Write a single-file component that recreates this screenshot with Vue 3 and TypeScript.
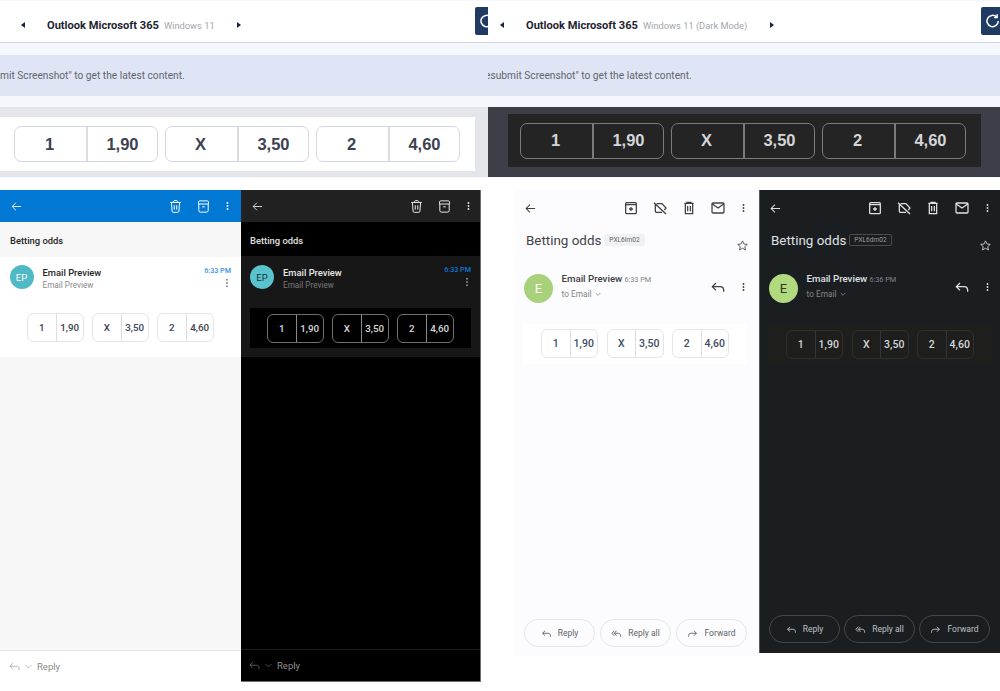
<template>
  <div class="page">
    <div class="top">
      <section v-for="col in columns" :key="col.sub" class="col" :class="col.theme">
        <header class="bar">
          <span class="tri left"></span>
          <span class="title">Outlook Microsoft 365</span>
          <span class="sub">{{ col.sub }}</span>
          <span class="tri right"></span>
          <span class="refresh">
            <svg viewBox="0 0 24 24" class="refresh-ico"><path d="M19 12a7.5 7.5 0 1 1-2.2-5.3M17.5 3v4.2h-4.2" /></svg>
          </span>
        </header>
        <div class="banner"><span class="banner-text">{{ col.note }}</span></div>
        <div class="preview">
          <div class="preview-inner">
            <div v-for="o in odds" :key="o.k" class="odd big">
              <b>{{ o.k }}</b><b>{{ o.v }}</b>
            </div>
          </div>
        </div>
      </section>
    </div>

    <div class="phones">
      <article v-for="p in outlook" :key="p.theme" class="ol" :class="p.theme">
        <div class="ol-head">
          <svg class="ic back" viewBox="0 0 24 24"><path :d="icons.back" /></svg>
          <span class="spacer"></span>
          <svg class="ic" viewBox="0 0 24 24"><path :d="icons.olTrash" /></svg>
          <svg class="ic" viewBox="0 0 24 24"><path :d="icons.olArchive" /></svg>
          <svg class="ic dots" viewBox="0 0 24 24"><path class="fill" :d="icons.dots" /></svg>
        </div>
        <div class="ol-subject">Betting odds</div>
        <div class="ol-body">
          <div class="ol-sender">
            <span class="ol-avatar">EP</span>
            <div class="ol-who">
              <div class="ol-name">Email Preview</div>
              <div class="ol-to">Email Preview</div>
            </div>
            <div class="ol-meta">
              <div class="ol-time">6:33 PM</div>
              <svg class="ol-more" viewBox="0 0 24 24"><path class="fill" :d="icons.dots" /></svg>
            </div>
          </div>
          <div class="band">
            <div v-for="o in odds" :key="o.k" class="odd small">
              <b>{{ o.k }}</b><b>{{ o.v }}</b>
            </div>
          </div>
        </div>
        <div class="ol-fill"></div>
        <footer class="ol-foot">
          <svg class="foot-ic" viewBox="0 0 24 24"><path :d="icons.reply" /></svg>
          <svg class="foot-chev" viewBox="0 0 24 24"><path d="M4 8l8 8 8-8" /></svg>
          <span>Reply</span>
        </footer>
      </article>

      <span class="phones-gap"></span>

      <article v-for="g in gmail" :key="g.theme" class="gm" :class="g.theme">
        <div class="gm-head">
          <svg class="gi gm-back" viewBox="0 0 24 24"><path :d="icons.back" /></svg>
          <span class="spacer"></span>
          <svg class="gi" viewBox="0 0 24 24"><path :d="icons.gmArchive" /></svg>
          <svg class="gi" viewBox="0 0 24 24"><path :d="icons.gmLabelOff" /></svg>
          <svg class="gi" viewBox="0 0 24 24"><path :d="icons.gmTrash" /></svg>
          <svg class="gi" viewBox="0 0 24 24"><path :d="icons.gmMail" /></svg>
          <svg class="gi gm-dots" viewBox="0 0 24 24"><path class="fill" :d="icons.dots" /></svg>
        </div>
        <div class="gm-subject">
          <span class="gm-title">Betting odds</span>
          <span class="gm-tag">{{ g.tag }}</span>
          <span class="spacer"></span>
          <svg class="gi gm-star" viewBox="0 0 24 24"><path :d="icons.star" /></svg>
        </div>
        <div class="gm-sender">
          <span class="gm-avatar">E</span>
          <div class="gm-who">
            <div><span class="gm-name">Email Preview</span> <span class="gm-time">{{ g.time }}</span></div>
            <div class="gm-to">to Email <svg class="gm-chev" viewBox="0 0 24 24"><path d="M5 9l7 7 7-7" /></svg></div>
          </div>
          <svg class="gi gm-reply" viewBox="0 0 24 24"><path :d="icons.reply" /></svg>
          <svg class="gi gm-dots gm-up" viewBox="0 0 24 24"><path class="fill" :d="icons.dots" /></svg>
        </div>
        <div class="gm-band">
          <div v-for="o in odds" :key="o.k" class="odd small">
            <b>{{ o.k }}</b><b>{{ o.v }}</b>
          </div>
        </div>
        <div class="gm-actions">
          <span v-for="a in actions" :key="a.label" class="gm-btn">
            <svg viewBox="0 0 24 24"><path :d="a.icon" /></svg>{{ a.label }}
          </span>
        </div>
      </article>
    </div>
  </div>
</template>

<script setup lang="ts">
const icons = {
  back: "M20.5 12H4M11 5l-7 7 7 7",
  dots: "M12 7.5a2 2 0 1 0 0-4 2 2 0 0 0 0 4zm0 6.5a2 2 0 1 0 0-4 2 2 0 0 0 0 4zm0 6.5a2 2 0 1 0 0-4 2 2 0 0 0 0 4z",
  olTrash: "M3.5 5.5h17M9 5.5V4a1.5 1.5 0 0 1 1.5-1.5h3A1.5 1.5 0 0 1 15 4v1.5M5.5 5.5l1 14a2 2 0 0 0 2 1.8h7a2 2 0 0 0 2-1.8l1-14M10 10v7M14 10v7",
  olArchive: "M4 8V5a2 2 0 0 1 2-2h12a2 2 0 0 1 2 2v3zM4.5 8v10.500a2.500 2.500 0 0 0 2.500 2.500h10a2.500 2.500 0 0 0 2.500-2.500V8M10 12.500h4",
  gmArchive: "M4 8V5.500A1.500 1.500 0 0 1 5.500 4h13A1.500 1.500 0 0 1 20 5.500V8M4 7h16M4 7v12a1.500 1.500 0 0 0 1.500 1.500h13A1.500 1.500 0 0 0 20 19V7M12 10.500v6M9 13.500h6",
  gmLabelOff: "M3 4l18 17M7 5.500h8l6 6.500-2.500 3M5 6.500V17a1.500 1.500 0 0 0 1.500 1.500H15",
  gmTrash: "M5 5h14M9 5V3.500h6V5M6.500 5v15.500h11V5M10 9v8M14 9v8",
  gmMail: "M3 6a1.500 1.500 0 0 1 1.500-1.500h15A1.500 1.500 0 0 1 21 6v12a1.500 1.500 0 0 1-1.500 1.500h-15A1.500 1.500 0 0 1 3 18zM3.500 6l8.500 6 8.500-6",
  star: "M12 3.500l2.600 5.700 6.200.7-4.600 4.200 1.300 6.100L12 17.100l-5.500 3.100 1.300-6.100-4.600-4.200 6.200-.7z",
  reply: "M9 6l-5.500 5.500L9 17M3.500 11.500H15c3.500 0 5.500 2 5.500 5.500v2",
  replyAll: "M7 6l-5 5.500L7 17M12 6l-5 5.500 5 5.500M7 11.500h9c3 0 5 2 5 5.500v2",
  forward: "M15 6l5.500 5.500L15 17M20.500 11.500H9c-3.500 0-5.500 2-5.500 5.500v2",
}

const odds = [
  { k: "1", v: "1,90" },
  { k: "X", v: "3,50" },
  { k: "2", v: "4,60" },
]

const columns = [
  { theme: "light", sub: "Windows 11", note: 'mit Screenshot" to get the latest content.' },
  { theme: "dark", sub: "Windows 11 (Dark Mode)", note: 'esubmit Screenshot" to get the latest content.' },
]

const outlook = [{ theme: "light" }, { theme: "dark" }]

const gmail = [
  { theme: "light", tag: "PXL6lm02", time: "6:33 PM" },
  { theme: "dark", tag: "PXL6dm02", time: "6:36 PM" },
]

const actions = [
  { label: "Reply", icon: icons.reply },
  { label: "Reply all", icon: icons.replyAll },
  { label: "Forward", icon: icons.forward },
]
</script>

<style>
html,
body {
  margin: 0;
  background: #fff;
}
</style>

<style scoped>
.page {
  width: 1000px;
  height: 691px;
  overflow: hidden;
  font-family: Roboto, "Liberation Sans", sans-serif;
  background: #fff;
}
svg path {
  fill: none;
  stroke: currentColor;
  stroke-width: 2;
}
svg path.fill {
  fill: currentColor;
  stroke: none;
}
.spacer {
  flex: 1;
}

/* top strip */
.top {
  display: grid;
  grid-template-columns: 488px 512px;
  height: 178px;
}
.col {
  display: flex;
  flex-direction: column;
  background: #f4f7fb;
  min-width: 0;
  overflow: hidden;
}
.bar {
  display: flex;
  align-items: center;
  height: 42px;
  margin-top: 1px;
  padding-top: 8px;
  background: #fff;
  border-bottom: 1px solid #d4d7dd;
  box-sizing: border-box;
}
.tri {
  width: 0;
  height: 0;
  border-top: 3px solid transparent;
  border-bottom: 3px solid transparent;
  margin-top: -2px;
}
.tri.left {
  border-right: 4px solid #15233c;
  margin-left: 21px;
  margin-right: 22px;
}
.tri.right {
  border-left: 4px solid #15233c;
  margin-left: 22px;
}
.dark .tri.right {
  margin-left: 23px;
}
.dark .tri.left {
  margin-left: 12px;
  margin-right: 22px;
}
.title {
  font-size: 11.1px;
  font-weight: 700;
  color: #1f2430;
  white-space: nowrap;
}
.sub {
  font-size: 9.3px;
  color: #a3a6ad;
  margin-left: 5px;
  white-space: nowrap;
}
.refresh {
  margin-left: auto;
  align-self: flex-start;
  width: 13px;
  height: 28px;
  margin-top: -2px;
  background: #1f3a63;
  border-radius: 2px 0 0 2px;
  overflow: hidden;
  color: #fff;
  display: block;
}
.dark .refresh {
  width: 19px;
}
.refresh-ico {
  display: block;
  width: 18px;
  height: 18px;
  margin: 5px 0 0 3px;
}
.banner {
  margin-top: 12px;
  height: 41px;
  background: #dfe5f5;
  display: flex;
  align-items: center;
  font-size: 10.2px;
  color: #62656d;
  white-space: nowrap;
}
.dark .banner-text {
  margin-left: -3px;
}
.preview {
  margin-top: 11px;
  height: 70px;
  background: #e4e5ea;
  padding: 10px 13px 6px 0;
  box-sizing: border-box;
}
.preview-inner {
  height: 54px;
  background: #fff;
  display: flex;
  align-items: center;
  gap: 7px;
  padding-left: 14px;
}
.dark .preview {
  background: #3d3e47;
  padding: 7px 19px 10px 20px;
}
.dark .preview-inner {
  height: 53px;
  background: #242424;
  padding-left: 12px;
}

/* odds pill, shared by all panels */
.odd {
  display: grid;
  grid-template-columns: 1fr 1fr;
  box-sizing: border-box;
  font-family: "Liberation Sans", Arial, sans-serif;
  color: #3d4252;
}
.odd b {
  display: flex;
  align-items: center;
  justify-content: center;
}
.odd b:last-child {
  border-left: 2px solid #dcdde0;
}
.odd.big {
  width: 144px;
  height: 36px;
  border: 1px solid #d6d7da;
  border-radius: 7px;
  font-size: 16.5px;
}
.odd.big b:first-child {
  padding-right: 2px;
}
.dark .odd.big {
  background: #242424;
  border-color: #7b7b7b;
  color: #d4d5d8;
}
.dark .odd.big b:last-child {
  border-left-color: #7b7b7b;
}
.odd.small {
  width: 57px;
  height: 29px;
  border: 1px solid #e6e6e8;
  border-radius: 6px;
  font-family: Roboto, "Liberation Sans", sans-serif;
  font-size: 9.8px;
}
.odd.small b {
  font-weight: 500;
}
.odd.small b:last-child {
  border-left-width: 1px;
}

/* outlook mobile */
.phones {
  display: flex;
  align-items: flex-start;
  margin-top: 12px;
}
.phones-gap {
  width: 34px;
  flex: none;
}
.ol {
  width: 241px;
  height: 492px;
  flex: none;
  display: flex;
  flex-direction: column;
  box-sizing: border-box;
  background: #f7f7f7;
}
.ol.dark {
  width: 240px;
  background: #000;
  border-right: 1px solid #6d6d6d;
  border-bottom: 1px solid #6d6d6d;
}
.ol-head {
  height: 32px;
  background: #0078d4;
  color: #fff;
  display: flex;
  align-items: center;
  padding: 0 8px 0 10px;
  gap: 13px;
  flex: none;
}
.dark .ol-head {
  background: #212121;
  color: #e8e8e8;
  padding-right: 6px;
}
.ic {
  width: 15px;
  height: 15px;
  overflow: visible;
}
.ic path {
  stroke-width: 1.6;
}
.ic.back {
  width: 13px;
  height: 13px;
}
.ic.dots {
  width: 11px;
  height: 14px;
  margin-left: -2px;
}
.ol-subject {
  height: 35px;
  flex: none;
  display: flex;
  align-items: center;
  padding: 2px 0 0 10px;
  box-sizing: border-box;
  font-size: 9.4px;
  font-weight: 500;
  color: #262626;
}
.dark .ol-subject {
  height: 34px;
  padding-top: 3px;
  padding-left: 9px;
  color: #e0e0e0;
  background: #000;
}
.ol-body {
  height: 100px;
  background: #fff;
  flex: none;
}
.dark .ol-body {
  height: 101px;
  background: #171717;
}
.ol-sender {
  display: flex;
  padding: 8px 10px 0 9.5px;
  height: 41px;
  box-sizing: border-box;
}
.dark .ol-sender {
  padding: 9px 9px 0 9px;
}
.ol-avatar {
  width: 24px;
  height: 24px;
  border-radius: 50%;
  background: #4fb9c5;
  color: #fff;
  font-size: 9.5px;
  display: flex;
  align-items: center;
  justify-content: center;
  flex: none;
}
.dark .ol-avatar {
  background: #5bc3cd;
  color: #143238;
}
.ol-who {
  margin-left: 9px;
  flex: 1;
}
.ol-name {
  font-size: 9.4px;
  font-weight: 500;
  color: #262626;
  line-height: 12px;
  margin-top: 2px;
}
.ol-to {
  font-size: 8.2px;
  color: #8a8a8a;
  line-height: 11px;
  margin-top: 1px;
}
.dark .ol-name {
  color: #e8e8e8;
}
.dark .ol-to {
  color: #777;
}
.ol-meta {
  display: flex;
  flex-direction: column;
  align-items: flex-end;
}
.ol-time {
  font-size: 7.2px;
  font-weight: 500;
  color: #3b93e6;
  line-height: 10px;
  margin-top: 1px;
}
.dark .ol-time {
  color: #0a78d6;
  margin-top: 0;
}
.ol-more {
  width: 12px;
  height: 12px;
  color: #8a8a8a;
  margin: 1px -2px 0 0;
}
.band {
  display: flex;
  justify-content: center;
  gap: 8px;
  margin-top: 8px;
  padding: 7px 0;
  margin-left: 9px;
  margin-right: 9px;
}
.dark .band {
  background: #000;
  margin-top: 11px;
  padding: 6px 0 5px;
  height: 40px;
  box-sizing: border-box;
  gap: 8px;
}
.dark .odd.small {
  background: transparent;
  color: #d8d8d8;
}
.ol.dark .odd.small {
  border-color: #6f6f6f;
}
.ol.dark .odd.small b:last-child {
  border-left-color: #8a8a8a;
}
.ol-fill {
  flex: 1;
}
.ol-foot {
  height: 32px;
  flex: none;
  box-sizing: border-box;
  background: #fff;
  border-top: 1px solid #e6e6e6;
  display: flex;
  align-items: center;
  padding-left: 8px;
  font-size: 9.5px;
  color: #8a8a8a;
}
.dark .ol-foot {
  background: #000;
  border-top-color: #1c1c1c;
  color: #8f8f8f;
  padding-left: 7px;
}
.foot-ic {
  width: 13px;
  height: 13px;
  opacity: 0.8;
}
.foot-ic path,
.foot-chev path {
  stroke-width: 1.4;
}
.foot-chev {
  width: 9px;
  height: 9px;
  margin: 0 4px 0 3px;
}

/* gmail mobile */
.gm {
  width: 244px;
  height: 466px;
  flex: none;
  display: flex;
  flex-direction: column;
  background: #fcfcff;
  color: #3c4043;
  box-sizing: border-box;
}
.gm.dark {
  width: 241px;
  height: 463px;
  background: #1b1e21;
  color: #dfe1e4;
  border-left: 1px solid #55585c;
}
.gm-head {
  display: flex;
  align-items: center;
  height: 36px;
  gap: 13px;
  padding: 0 10.5px 0 9px;
  flex: none;
}
.dark .gm-head {
  padding-right: 7.5px;
}
.gi {
  width: 16px;
  height: 16px;
  flex: none;
}
.gi path {
  stroke-width: 1.9;
}
.gm-back {
  width: 13px;
  height: 13px;
}
.gm-dots {
  width: 11px;
  height: 14px;
  margin-left: -1.5px;
}
.gm-subject {
  display: flex;
  align-items: center;
  height: 28px;
  padding: 0 10px 0 11px;
  flex: none;
}
.dark .gm-subject {
  padding-right: 8px;
}
.gm-title {
  font-size: 13.4px;
  color: #3f4246;
  white-space: nowrap;
}
.dark .gm-title {
  color: #dfe1e4;
}
.gm-tag {
  font-size: 6.6px;
  background: #f0f1f3;
  color: #5f6368;
  border-radius: 2px;
  padding: 2px 5px;
  margin-left: 3px;
}
.dark .gm-tag {
  background: transparent;
  border: 1px solid #4a4d50;
  color: #9a9da1;
  padding: 1px 4px;
}
.gm-star {
  margin-top: 11px;
  width: 13px;
  height: 13px;
}
.gm-star path {
  stroke-width: 1.5;
}
.gm-sender {
  display: flex;
  align-items: center;
  margin-top: 20px;
  height: 29px;
  padding: 0 10.5px 0 9px;
  gap: 8.5px;
  flex: none;
}
.dark .gm-sender {
  padding-right: 7.5px;
}
.gm-reply {
  margin-right: 5px;
  margin-top: -3px;
}
.gm-up {
  margin-top: -3px;
}
.gm-avatar {
  width: 29px;
  height: 29px;
  border-radius: 50%;
  background: #a9d17b;
  color: #fff;
  font-size: 13px;
  display: flex;
  align-items: center;
  justify-content: center;
  flex: none;
}
.dark .gm-avatar {
  background: #b1da80;
  color: #2b3a1b;
}
.gm-who {
  flex: 1;
  font-size: 8.5px;
  line-height: 14px;
  white-space: nowrap;
  margin-top: -5px;
}
.gm-name {
  font-size: 9.7px;
  font-weight: 500;
}
.gm-time {
  font-size: 7.3px;
  color: #80858a;
}
.gm-to {
  font-size: 8.3px;
  color: #80858a;
  display: flex;
  align-items: center;
  gap: 3px;
}
.gm-chev {
  width: 8px;
  height: 8px;
}
.gm-chev path {
  stroke-width: 2.4;
}
.gm-band {
  display: flex;
  justify-content: center;
  gap: 8.500px;
  margin: 21px 12px 0 8px;
  padding: 5px 0 6px;
  background: #fff;
  flex: none;
}
.gm .odd.small {
  font-size: 10.5px;
  color: #3d4b63;
}
.dark .gm-band {
  background: #1e1e1c;
  margin-top: 22px;
  margin-right: 8px;
}
.gm.dark .odd.small {
  border-color: #2e2f31;
  color: #d5d7da;
}
.gm.dark .odd.small b:last-child {
  border-left-color: #33353a;
}
.gm-actions {
  display: flex;
  gap: 5px;
  margin-top: auto;
  padding: 0 0 9px 9px;
}
.dark .gm-actions {
  gap: 4px;
  padding: 0 0 10px 9px;
}
.gm-btn {
  width: 71px;
  height: 28px;
  box-sizing: border-box;
  border: 1px solid #e6e7ea;
  border-radius: 14px;
  display: flex;
  align-items: center;
  justify-content: center;
  gap: 6px;
  font-size: 8.5px;
  color: #5f6368;
}
.dark .gm-btn {
  border-color: #44474a;
  color: #bfc1c4;
}
.gm-btn svg {
  width: 11px;
  height: 11px;
}
</style>
